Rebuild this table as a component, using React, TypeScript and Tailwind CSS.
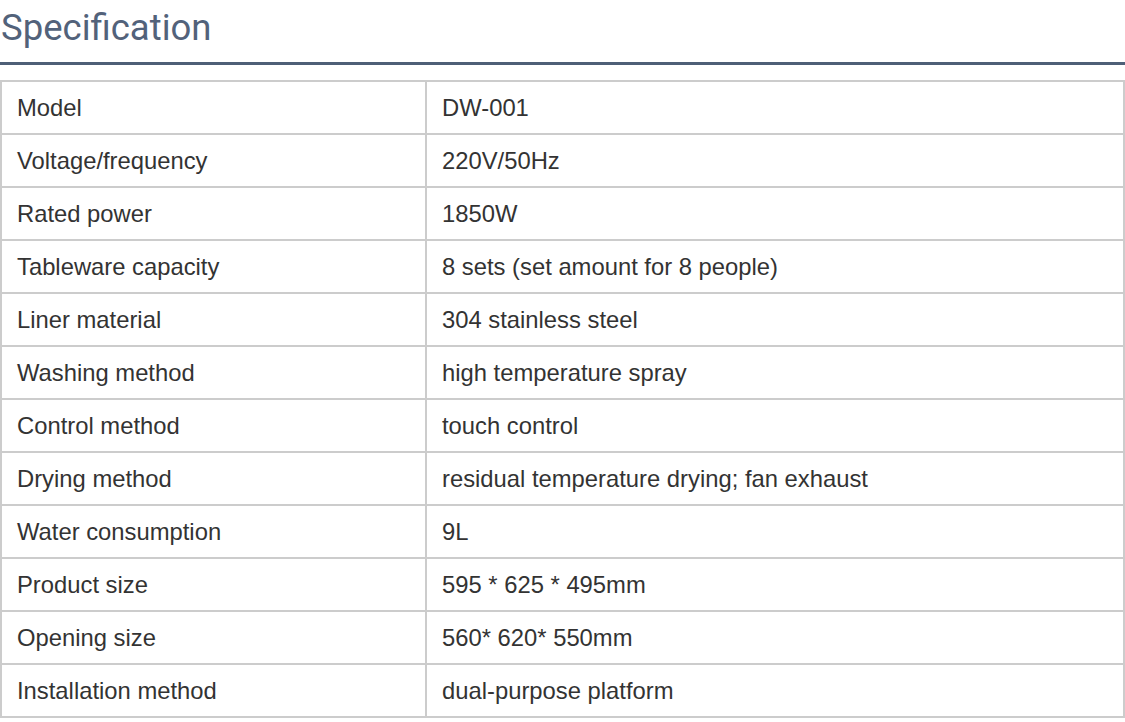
import React from 'react';

const specs: [string, string][] = [
  ['Model', 'DW-001'],
  ['Voltage/frequency', '220V/50Hz'],
  ['Rated power', '1850W'],
  ['Tableware capacity', '8 sets (set amount for 8 people)'],
  ['Liner material', '304 stainless steel'],
  ['Washing method', 'high temperature spray'],
  ['Control method', 'touch control'],
  ['Drying method', 'residual temperature drying; fan exhaust'],
  ['Water consumption', '9L'],
  ['Product size', '595 * 625 * 495mm'],
  ['Opening size', '560* 620* 550mm'],
  ['Installation method', 'dual-purpose platform'],
];

export default function App() {
  return (
    <div className="w-[1125px] h-[722px] bg-white overflow-hidden">
      {/* Heading */}
      <div className="h-[65px] border-b-[3px] border-[#4e5f77] flex items-start">
        <h2 className="pl-[1px] pt-[6px] text-[36.5px] leading-[44px] text-[#52627a] font-['Roboto',sans-serif]">
          Specification
        </h2>
      </div>

      {/* Spec table */}
      <table className="mt-[15px] w-full border-collapse font-['Liberation_Sans',Arial,sans-serif] text-[23.8px] text-[#333]">
        <tbody>
          {specs.map(([label, value]) => (
            <tr key={label} className="h-[53px]">
              <td className="w-[425px] border-2 border-[#cccccc] pl-[15px] align-middle">{label}</td>
              <td className="border-2 border-[#cccccc] pl-[15px] align-middle">{value}</td>
            </tr>
          ))}
        </tbody>
      </table>
    </div>
  );
}
